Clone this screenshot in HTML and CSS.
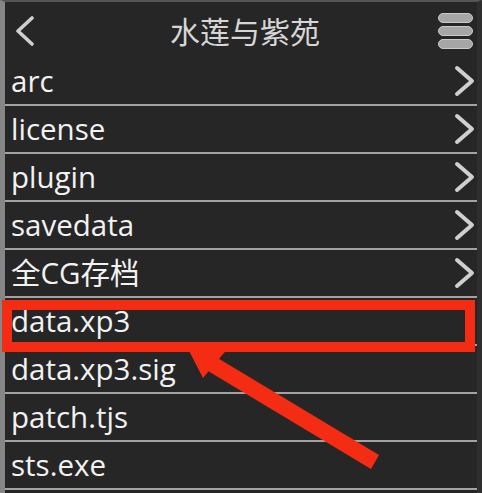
FILE: index.html
```html
<!DOCTYPE html>
<html lang="zh-CN">
<head>
<meta charset="utf-8">
<title>水莲与紫苑</title>
<link rel="stylesheet" href="styles.css">
</head>
<body>
<div class="page">
  <div class="screen">
    <div class="header">
      <div class="hbox hbox-left">
        <svg class="back" width="20" height="30" viewBox="0 0 20 30"><polyline points="17,2 3,15 17,28" fill="none" stroke="#cfcfcf" stroke-width="3.6" stroke-linecap="round" stroke-linejoin="round"/></svg>
      </div>
      <div class="title">水莲与紫苑</div>
      <div class="hbox hbox-right">
        <div class="menu"><span class="bar"></span><span class="bar"></span><span class="bar"></span></div>
      </div>
    </div>
    <ul class="list">
      <li class="row"><span class="name">arc</span><svg class="chev" width="22" height="32" viewBox="0 0 22 32"><polyline points="3,3 18,16 3,29" fill="none" stroke="#cfcfcf" stroke-width="4" stroke-linecap="round" stroke-linejoin="round"/></svg></li>
      <li class="row"><span class="name">license</span><svg class="chev" width="22" height="32" viewBox="0 0 22 32"><polyline points="3,3 18,16 3,29" fill="none" stroke="#cfcfcf" stroke-width="4" stroke-linecap="round" stroke-linejoin="round"/></svg></li>
      <li class="row"><span class="name">plugin</span><svg class="chev" width="22" height="32" viewBox="0 0 22 32"><polyline points="3,3 18,16 3,29" fill="none" stroke="#cfcfcf" stroke-width="4" stroke-linecap="round" stroke-linejoin="round"/></svg></li>
      <li class="row"><span class="name">savedata</span><svg class="chev" width="22" height="32" viewBox="0 0 22 32"><polyline points="3,3 18,16 3,29" fill="none" stroke="#cfcfcf" stroke-width="4" stroke-linecap="round" stroke-linejoin="round"/></svg></li>
      <li class="row"><span class="name">全CG存档</span><svg class="chev" width="22" height="32" viewBox="0 0 22 32"><polyline points="3,3 18,16 3,29" fill="none" stroke="#cfcfcf" stroke-width="4" stroke-linecap="round" stroke-linejoin="round"/></svg></li>
      <li class="row"><span class="name">data.xp3</span></li>
      <li class="row"><span class="name">data.xp3.sig</span></li>
      <li class="row"><span class="name">patch.tjs</span></li>
      <li class="row"><span class="name">sts.exe</span></li>
    </ul>
  </div>
  <svg class="annot" width="482" height="493" viewBox="0 0 482 493">
    <rect x="7" y="305" width="463" height="42" fill="none" stroke="#f42c14" stroke-width="10"/>
    <polygon points="186,345 229,347 203,378" fill="#f42c14"/>
    <polygon points="211,354 379,455 371,469 203,368" fill="#f42c14"/>
  </svg>
</div>
</body>
</html>
```

FILE: styles.css
```css
html, body {
  margin: 0;
  padding: 0;
  background: #262626;
}

.page {
  position: relative;
  width: 482px;
  height: 493px;
  overflow: hidden;
}

.screen {
  box-sizing: border-box;
  width: 482px;
  height: 493px;
  background: #262626;
  border-left: 5px solid #868686;
  border-top: 2px solid #555555;
  border-right: 5px solid #2e2e2e;
  display: flex;
  flex-direction: column;
  font-family: "Open Sans", "Noto Sans CJK SC", sans-serif;
}

.header {
  height: 56px;
  display: flex;
  align-items: center;
  padding: 0 4px 0 10px;
}

.hbox {
  width: 44px;
  display: flex;
  align-items: center;
}

.hbox-left {
  justify-content: flex-start;
}

.hbox-right {
  justify-content: flex-end;
}

.back {
  display: block;
  margin-top: 1px;
}

.title {
  flex: 1;
  text-align: center;
  color: #d6d6d6;
  font-family: "Noto Sans CJK SC", sans-serif;
  font-size: 30px;
  line-height: 40px;
  padding-left: 2px;
}

.menu {
  display: flex;
  flex-direction: column;
  gap: 3px;
  margin-top: 1px;
}

.bar {
  display: block;
  width: 33px;
  height: 8px;
  border-radius: 5px;
  background: #a6a6a6;
  border: 1px solid #cacaca;
}

.list {
  list-style: none;
  margin: 0;
  padding: 0;
}

.row {
  height: 46px;
  border-bottom: 2px solid #a2a2a2;
  display: flex;
  align-items: center;
  justify-content: space-between;
  padding: 0 1px 0 6px;
}

.name {
  color: #f2f2f2;
  font-size: 29.5px;
  line-height: 46px;
  white-space: nowrap;
}

.chev {
  display: block;
}

.annot {
  position: absolute;
  left: 0;
  top: 0;
  pointer-events: none;
}
```
